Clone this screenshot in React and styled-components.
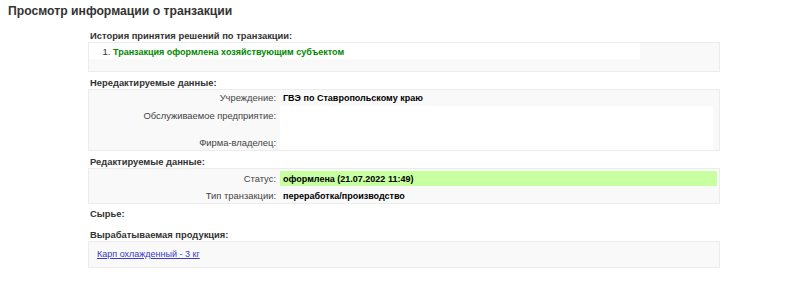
import React from "react";
import styled, { createGlobalStyle } from "styled-components";

const Global = createGlobalStyle`
  html, body { margin: 0; padding: 0; background: #fff; }
  body { font-family: "Liberation Sans", Arial, sans-serif; font-size: 10px; color: #000; }
`;

const Page = styled.div`
  padding: 4px 8px 0 8px;
`;

const Title = styled.h1`
  margin: 0 0 12px 0;
  font-family: "Liberation Sans", Arial, sans-serif;
  font-size: 12.2px;
  line-height: 14px;
  font-weight: bold;
  color: #333;
`;

const Content = styled.div`
  margin-left: 80px;
  width: 632px;
  display: flex;
  flex-direction: column;
`;

const Label = styled.div`
  font-family: "Liberation Sans", Arial, sans-serif;
  font-size: 9.4px;
  font-weight: bold;
  color: #333;
  padding-left: 2px;
  height: 12px;
  line-height: 12px;
  margin-bottom: ${(p) => p.$mb ?? 0}px;
`;

const Box = styled.div`
  background: #f9f9f9;
  border: 1px solid #ececec;
  margin-bottom: ${(p) => p.$mb ?? 0}px;
  min-height: ${(p) => p.$h ?? 0}px;
  box-sizing: border-box;
`;

const List = styled.ol`
  margin: 0;
  padding: 3px 0 1px 24px;
  width: 527px;
  background: #fff;
  font-family: "Liberation Sans", Arial, sans-serif;
  font-size: 9.5px;
  color: #333;
  li { line-height: 12px; }
`;

const Green = styled.span`
  color: #080;
  font-weight: bold;
  font-size: 9px;
`;

const Grid = styled.div`
  display: grid;
  grid-template-columns: 191px 1fr;
  padding: ${(p) => p.$pt}px ${(p) => p.$pr}px 0 0;
`;

const Key = styled.div`
  text-align: right;
  color: #444;
  font-size: 9.4px;
  padding-right: 4px;
  height: ${(p) => p.$h}px;
  line-height: 12px;
  padding-top: ${(p) => p.$pt ?? 2}px;
  box-sizing: border-box;
`;

const Value = styled.div`
  font-weight: bold;
  font-size: 9px;
  color: #000;
  padding-left: 3px;
  height: ${(p) => p.$h}px;
  line-height: 12px;
  padding-top: ${(p) => p.$pt ?? 2}px;
  box-sizing: border-box;
  background: ${(p) => p.$bg || "transparent"};
`;

const Link = styled.a`
  color: #3b3bc4;
  text-decoration: underline;
  font-size: 9px;
`;

const LinkBox = styled.div`
  padding: 6px 8px 7px 8px;
  line-height: 12px;
`;

export default function App() {
  return (
    <>
      <Global />
      <Page>
        <Title>Просмотр информации о транзакции</Title>
        <Content>
          <Label>История принятия решений по транзакции:</Label>
          <Box $mb={5} $h={30}>
            <List>
              <li><Green>Транзакция оформлена хозяйствующим субъектом</Green></li>
            </List>
          </Box>
          <Label $mb={0}>Нередактируемые данные:</Label>
          <Box $mb={5}>
            <Grid $pt={0} $pr={6}>
              <Key $h={16}>Учреждение:</Key>
              <Value $h={16}>ГВЭ по Ставропольскому краю</Value>
              <Key $h={26} $pt={4}>Обслуживаемое предприятие:</Key>
              <Value $h={26} $pt={4} $bg="#fff"></Value>
              <Key $h={18} $pt={5}>Фирма-владелец:</Key>
              <Value $h={18} $pt={5} $bg="#fff"></Value>
            </Grid>
          </Box>
          <Label $mb={0}>Редактируемые данные:</Label>
          <Box $mb={4}>
            <Grid $pt={2} $pr={2}>
              <Key $h={15} $pt={2}>Статус:</Key>
              <Value $h={15} $pt={2} $bg="#c8ffa0">оформлена (21.07.2022 11:49)</Value>
              <Key $h={17} $pt={4}>Тип транзакции:</Key>
              <Value $h={17} $pt={4}>переработка/производство</Value>
            </Grid>
          </Box>
          <Label $mb={9}>Сырье:</Label>
          <Label $mb={0}>Вырабатываемая продукция:</Label>
          <Box>
            <LinkBox>
              <Link href="#">Карп охлажденный - 3 кг</Link>
            </LinkBox>
          </Box>
        </Content>
      </Page>
    </>
  );
}
